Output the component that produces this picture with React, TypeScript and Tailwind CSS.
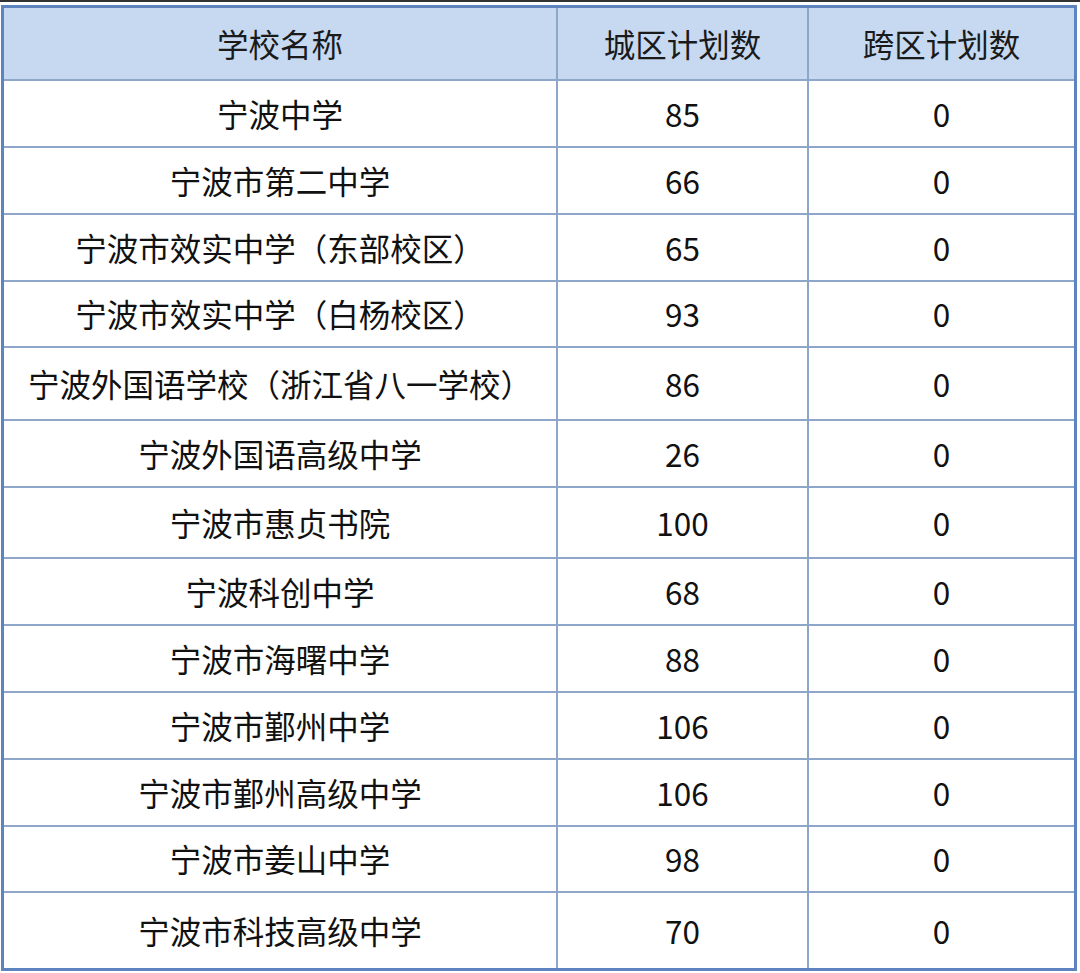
import React from "react";

const rows: { name: string; city: string; cross: string; h: string }[] = [
  { name: "宁波中学", city: "85", cross: "0", h: "h-[67px]" },
  { name: "宁波市第二中学", city: "66", cross: "0", h: "h-[67px]" },
  { name: "宁波市效实中学（东部校区）", city: "65", cross: "0", h: "h-[67px]" },
  { name: "宁波市效实中学（白杨校区）", city: "93", cross: "0", h: "h-[66px]" },
  { name: "宁波外国语学校（浙江省八一学校）", city: "86", cross: "0", h: "h-[73px]" },
  { name: "宁波外国语高级中学", city: "26", cross: "0", h: "h-[67px]" },
  { name: "宁波市惠贞书院", city: "100", cross: "0", h: "h-[71px]" },
  { name: "宁波科创中学", city: "68", cross: "0", h: "h-[67px]" },
  { name: "宁波市海曙中学", city: "88", cross: "0", h: "h-[67px]" },
  { name: "宁波市鄞州中学", city: "106", cross: "0", h: "h-[67px]" },
  { name: "宁波市鄞州高级中学", city: "106", cross: "0", h: "h-[67px]" },
  { name: "宁波市姜山中学", city: "98", cross: "0", h: "h-[66px]" },
  { name: "宁波市科技高级中学", city: "70", cross: "0", h: "h-[75px]" },
];

const font = { fontFamily: '"Noto Sans CJK SC", "Noto Sans", sans-serif' };

function Row({
  cells,
  h,
  last,
  header,
}: {
  cells: string[];
  h: string;
  last?: boolean;
  header?: boolean;
}) {
  return (
    <div
      className={`grid grid-cols-[554px_251px_1fr] ${h} ${
        last ? "" : "border-b-2 border-[#8ea6c9]"
      } ${header ? "bg-[#c6d9f1] text-[#1a1a1a]" : "bg-white text-[#111111]"}`}
    >
      {cells.map((c, i) => (
        <div
          key={i}
          className={`flex items-center justify-center text-[31.5px] leading-none whitespace-nowrap ${
            i < 2 ? "border-r-2 border-[#8ea6c9]" : ""
          }`}
        >
          {c}
        </div>
      ))}
    </div>
  );
}

export default function App() {
  return (
    <div className="w-[1080px] h-[973px] bg-white overflow-hidden" style={font}>
      <div className="h-[2px] bg-[#333333]" />
      <div className="pt-[3px] pl-[1px] pr-[3px]">
        <div className="border-[3px] border-[#5d84be]">
          <Row cells={["学校名称", "城区计划数", "跨区计划数"]} h="h-[73px]" header />
          {rows.map((r, i) => (
            <Row
              key={i}
              cells={[r.name, r.city, r.cross]}
              h={r.h}
              last={i === rows.length - 1}
            />
          ))}
        </div>
      </div>
    </div>
  );
}
